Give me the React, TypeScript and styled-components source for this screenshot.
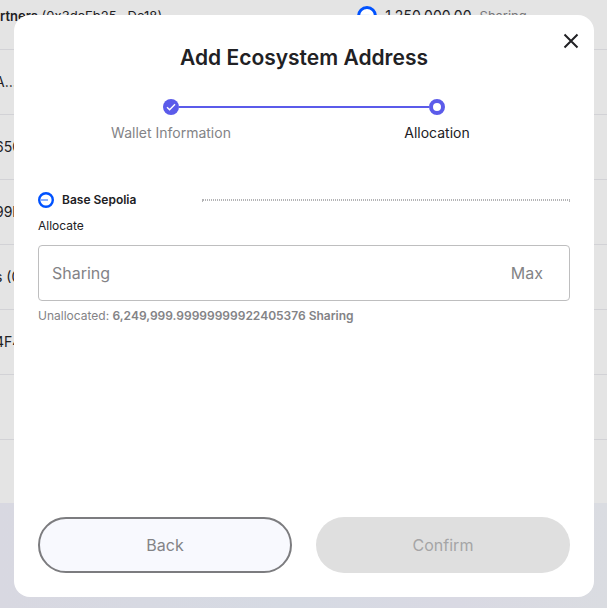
import React from "react";
import styled, { createGlobalStyle } from "styled-components";

const GlobalStyle = createGlobalStyle`
  *, *::before, *::after { box-sizing: border-box; }
  body { margin: 0; background: #e4e4e4; }
  body, button, input { font-family: "Inter", sans-serif; color: #212124; }
`;

const Page = styled.div`
  height: 100vh;
  display: flex;
  flex-direction: column;
  overflow: hidden;
`;

const HolderList = styled.ul`
  flex: none;
  margin: 0;
  padding: 0;
  list-style: none;
`;

const HolderRow = styled.li<{ $first?: boolean }>`
  height: ${(p) => (p.$first ? 50 : 65)}px;
  padding-top: ${(p) => (p.$first ? 6 : 22)}px;
  border-bottom: 1px solid #d2d2d6;
  display: grid;
  grid-template-columns: 59% 1fr;
  font-size: 14px;
  line-height: 20px;
  white-space: nowrap;
`;

const HolderName = styled.span<{ $compact?: boolean }>`
  margin-left: ${(p) => (p.$compact ? 0 : -5)}px;
  font-size: ${(p) => (p.$compact ? 13 : 14)}px;
  b { font-weight: 600; }
`;

const HolderAmount = styled.span`
  display: flex;
  align-items: flex-start;
  gap: 8px;
  margin-left: -1px;
  color: #212124;
  small { font-size: 13px; color: #77777a; }
`;

const PageFooter = styled.div`
  flex: 1;
  margin-top: 63px;
  background: linear-gradient(90deg, #d8d8e1, #d6dae3 48%, #d9d9e3 75%, #dadce1);
`;

const Overlay = styled.div`
  position: fixed;
  inset: 0;
  display: flex;
  padding: 15px 13px 11px 14px;
`;

const Dialog = styled.section`
  flex: 1;
  display: flex;
  flex-direction: column;
  padding: 12px 24px 24px;
  border-radius: 16px;
  background: #fff;
`;

const CloseButton = styled.button`
  align-self: flex-end;
  display: flex;
  margin-right: -15px;
  padding: 2px;
  border: 0;
  background: none;
  cursor: pointer;
`;

const Title = styled.h2`
  margin: -11px 0 0;
  text-align: center;
  font-size: 21px;
  line-height: 28px;
  font-weight: 600;
`;

const Track = styled.div`
  display: flex;
  align-items: center;
  margin-top: 27px;
  padding: 0 calc(25% - 8px);
  svg { flex: none; }
`;

const Connector = styled.span`
  flex: 1;
  height: 2px;
  background: #5b5bea;
`;

const StepLabels = styled.div`
  display: grid;
  grid-template-columns: 1fr 1fr;
  margin-top: 8px;
  text-align: center;
  font-size: 14px;
  line-height: 20px;
`;

const StepLabel = styled.span<{ $active?: boolean }>`
  color: ${(p) => (p.$active ? "#212124" : "#838386")};
`;

const NetworkRow = styled.div`
  display: grid;
  grid-template-columns: 156px 1fr;
  gap: 8px;
  align-items: center;
  margin-top: 49px;
`;

const NetworkName = styled.span`
  display: flex;
  align-items: center;
  gap: 8px;
  font-size: 12px;
  line-height: 16px;
  font-weight: 600;
`;

const DottedRule = styled.hr`
  width: 100%;
  margin: 0;
  border: 1px dotted #b4b4b6;
`;

const FieldLabel = styled.label`
  margin-top: 10px;
  font-size: 12px;
  line-height: 16px;
`;

const Field = styled.div`
  display: flex;
  align-items: center;
  height: 56px;
  margin-top: 11px;
  padding: 0 26px 0 13px;
  border: 1px solid #bebebf;
  border-radius: 4px;
`;

const AmountInput = styled.input`
  flex: 1;
  min-width: 0;
  padding: 0;
  border: 0;
  outline: 0;
  background: none;
  font-size: 16px;
  line-height: 24px;
  &::placeholder { color: #838386; opacity: 1; }
`;

const MaxButton = styled.button`
  padding: 0;
  border: 0;
  background: none;
  color: #838386;
  font-size: 16px;
  line-height: 24px;
`;

const Helper = styled.p`
  margin: 7px 0 0;
  color: #838386;
  font-size: 12px;
  line-height: 16px;
  strong { font-weight: 600; }
`;

const Actions = styled.div`
  display: grid;
  grid-template-columns: 1fr 1fr;
  gap: 24px;
  margin-top: auto;
`;

const ActionButton = styled.button<{ $outlined?: boolean }>`
  height: 56px;
  border: ${(p) => (p.$outlined ? "2px solid #7c7c7f" : "0")};
  border-radius: 28px;
  background: ${(p) => (p.$outlined ? "#f8f9fe" : "#dfdfdf")};
  color: ${(p) => (p.$outlined ? "#838386" : "#a5a5a6")};
  font-size: 16px;
`;

const holders = ["A…0x7", "650", "99D", "s (0x", "4F4", ""];

function NetworkIcon({ size }: { size: number }) {
  return (
    <svg width={size} height={size} viewBox="0 0 16 16" aria-hidden="true">
      <circle cx="8" cy="8" r="6.8" fill="#fff" stroke="#0052ff" strokeWidth="2.4" />
      <path d="M2.5 8H10" stroke="#7da8ff" strokeWidth="1.8" />
    </svg>
  );
}

export default function App() {
  return (
    <>
      <GlobalStyle />
      <Page>
        <HolderList>
          <HolderRow $first>
            <HolderName $compact>
              <b>rtners</b> (0x3dcEb25...De18)
            </HolderName>
            <HolderAmount>
              <NetworkIcon size={20} />
              1,250,000.00 <small>Sharing</small>
            </HolderAmount>
          </HolderRow>
          {holders.map((holder, i) => (
            <HolderRow key={i}>
              <HolderName>{holder}</HolderName>
            </HolderRow>
          ))}
        </HolderList>
        <PageFooter />
      </Page>
      <Overlay>
        <Dialog role="dialog" aria-modal="true" aria-labelledby="dialog-title">
          <CloseButton type="button" aria-label="Close">
            <svg width="24" height="24" viewBox="0 0 24 24" fill="none">
              <path d="M5.5 5.5l13 13M18.5 5.5l-13 13" stroke="#212124" strokeWidth="2" />
            </svg>
          </CloseButton>
          <Title id="dialog-title">Add Ecosystem Address</Title>
          <Track>
            <svg width="16" height="16" viewBox="0 0 16 16" fill="none" aria-hidden="true">
              <circle cx="8" cy="8" r="8" fill="#5b5bea" />
              <path d="M4 8.2l2.6 2.6L12 5.3" stroke="#fff" strokeWidth="1.4" />
            </svg>
            <Connector />
            <svg width="16" height="16" viewBox="0 0 16 16" fill="none" aria-hidden="true">
              <circle cx="8" cy="8" r="6" fill="#fff" stroke="#5b5bea" strokeWidth="4" />
            </svg>
          </Track>
          <StepLabels>
            <StepLabel>Wallet Information</StepLabel>
            <StepLabel $active>Allocation</StepLabel>
          </StepLabels>
          <NetworkRow>
            <NetworkName>
              <NetworkIcon size={16} />
              Base Sepolia
            </NetworkName>
            <DottedRule />
          </NetworkRow>
          <FieldLabel htmlFor="amount">Allocate</FieldLabel>
          <Field>
            <AmountInput id="amount" inputMode="decimal" placeholder="Sharing" />
            <MaxButton type="button">Max</MaxButton>
          </Field>
          <Helper>
            Unallocated: <strong>6,249,999.99999999922405376 Sharing</strong>
          </Helper>
          <Actions>
            <ActionButton type="button" $outlined>Back</ActionButton>
            <ActionButton type="button" disabled>Confirm</ActionButton>
          </Actions>
        </Dialog>
      </Overlay>
    </>
  );
}
